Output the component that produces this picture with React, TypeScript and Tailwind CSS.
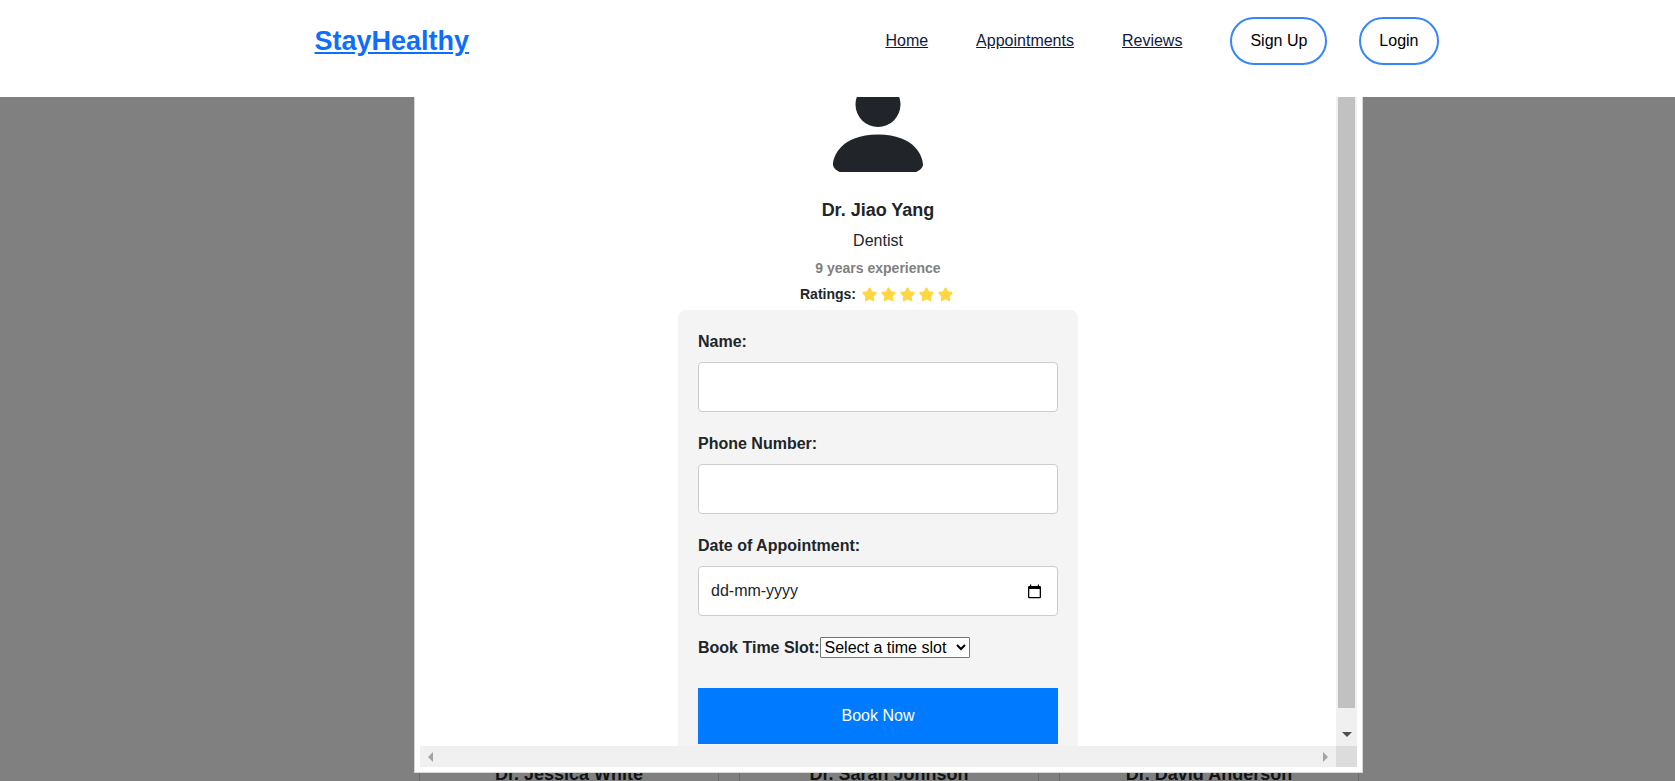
import React from "react";

const doctors = ["Dr. Jessica White", "Dr. Sarah Johnson", "Dr. David Anderson"];

function Star() {
  return (
    <svg viewBox="0 0 14 14" className="size-[15px]" aria-hidden="true">
      <path
        d="M7 1.400 8.800 4.900 12.600 5.500 9.900 8.300 10.500 12.200 7 10.600 3.500 12.200 4.100 8.300 1.400 5.500 5.200 4.900Z"
        fill="#ffd740"
        stroke="#ffd740"
        strokeWidth="2"
        strokeLinejoin="round"
      />
    </svg>
  );
}

function PersonIcon() {
  return (
    <svg viewBox="0 0 16 16" className="size-[120px] shrink-0" fill="#212529" aria-hidden="true">
      <path d="M2.900 14C2.400 13.800 2 13.400 2 13c0-1 1-4 6-4s6 3 6 4c0 .4-.4.8-.9 1H2.900Zm5.100-6a3 3 0 1 0 0-6 3 3 0 0 0 0 6Z" />
    </svg>
  );
}

function Header() {
  return (
    <header className="h-[97px] shrink-0 bg-white">
      <div className="mx-auto flex max-w-[1202px] items-center justify-between pt-[17px] pl-[78px]">
        <a href="#" className="text-[27px] leading-8 font-bold text-[#0d6efd] underline">
          StayHealthy
        </a>
        <nav className="flex items-center gap-12 text-base text-[#0f1a3f]">
          <a href="#home" className="underline">Home</a>
          <a href="#appointments" className="underline">Appointments</a>
          <a href="#reviews" className="underline">Reviews</a>
          <div className="flex gap-8 text-black">
            <button className="h-12 rounded-full border-2 border-[#3685fb] px-[18px]">Sign Up</button>
            <button className="h-12 rounded-full border-2 border-[#3685fb] px-[18px]">Login</button>
          </div>
        </nav>
      </div>
    </header>
  );
}

function DoctorCards() {
  return (
    <div className="mx-auto h-full max-w-[1043px] pl-[103px]">
      <div className="grid h-full grid-cols-3 gap-5">
        {doctors.map((name) => (
          <article key={name} className="border-x border-[#6a6a6a] pt-[665px] text-center">
            <h3 className="text-lg leading-6 font-bold whitespace-nowrap text-[#111315]">{name}</h3>
          </article>
        ))}
      </div>
    </div>
  );
}

function BookingForm() {
  const field = "mt-2 mb-5 h-[50px] w-full rounded border border-[#ccc] bg-white px-3";
  return (
    <form className="w-[400px] rounded-lg bg-[#f4f4f4] p-5" onSubmit={(e) => e.preventDefault()}>
      <label htmlFor="name" className="block font-bold">Name:</label>
      <input id="name" type="text" className={field} />
      <label htmlFor="phone" className="block font-bold">Phone Number:</label>
      <input id="phone" type="tel" className={field} />
      <label htmlFor="date" className="block font-bold">Date of Appointment:</label>
      <div className="mt-2 mb-5 flex h-[50px] items-center rounded border border-[#ccc] bg-white pr-4 pl-3">
        <input
          id="date"
          type="text"
          placeholder="dd-mm-yyyy"
          className="min-w-0 flex-1 outline-none placeholder:text-[#212529]"
        />
        <button type="button" aria-label="Open calendar">
          <svg viewBox="0 0 13 15" className="h-[15px] w-[13px]" aria-hidden="true">
            <path
              d="M2 .5h1.200V2h6.600V.5H11V2h.8Q13 2 13 3.200V13q0 1.200-1.200 1.200H1.200Q0 14.200 0 13V3.200Q0 2 1.200 2H2ZM1.300 5v7.900h10.400V5Z"
              fill="#000"
              fillRule="evenodd"
            />
          </svg>
        </button>
      </div>
      <div className="mb-7 flex h-6 items-center">
        <label htmlFor="slot" className="font-bold whitespace-nowrap">Book Time Slot:</label>
        <select id="slot" className="mb-0.5 h-[21px] w-[150px] rounded-[1px] border border-[#767676] bg-white leading-none text-black">
          <option>Select a time slot</option>
          <option>9:00 AM</option>
          <option>10:00 AM</option>
        </select>
      </div>
      <button type="submit" className="h-14 w-full bg-[#007bff] text-white">Book Now</button>
    </form>
  );
}

function BookingDialog() {
  return (
    <div className="absolute inset-0 pb-2">
      <div className="mx-auto h-full max-w-[1051px] pl-[102px]">
        <div
          role="dialog"
          aria-label="Book an appointment"
          className="flex h-full flex-col border border-t-0 border-[#d7d9d7] bg-white px-[5px] pb-[5px]"
        >
          <div className="flex min-h-0 flex-1">
            <div className="min-w-0 flex-1 overflow-hidden">
              <div className="-mt-[30px] flex flex-col items-center">
                <PersonIcon />
                <h2 className="mt-[11px] text-lg leading-6 font-bold">Dr. Jiao Yang</h2>
                <p className="mt-[7px] leading-6">Dentist</p>
                <p className="mt-[3px] text-sm leading-6 font-bold text-[#808080]">9 years experience</p>
                <div className="mt-[2px] flex items-center pr-[3px]">
                  <span className="text-sm leading-6 font-bold">Ratings:</span>
                  <span className="ml-1.5 flex gap-1">
                    <Star />
                    <Star />
                    <Star />
                    <Star />
                    <Star />
                  </span>
                </div>
                <div className="mt-1">
                  <BookingForm />
                </div>
              </div>
            </div>
            <div className="flex w-[21px] flex-col items-center bg-[#f0f0f0]">
              <div className="w-[17px] flex-1 bg-[#c1c1c1]" />
              <div className="flex h-[38px] flex-col items-center justify-end pb-[9px]">
                <svg viewBox="0 0 10 5" className="h-[5px] w-2.5" aria-hidden="true">
                  <path d="M0 0h10L5 5Z" fill="#505050" />
                </svg>
              </div>
            </div>
          </div>
          <div className="flex h-[21px]">
            <div className="flex flex-1 items-center justify-between bg-[#f0f0f0] px-2">
              <svg viewBox="0 0 5 10" className="h-2.5 w-[5px]" aria-hidden="true">
                <path d="M5 0v10L0 5Z" fill="#a3a3a3" />
              </svg>
              <svg viewBox="0 0 5 10" className="h-2.5 w-[5px]" aria-hidden="true">
                <path d="M0 0v10L5 5Z" fill="#a3a3a3" />
              </svg>
            </div>
            <div className="w-[21px] bg-[#dcdcdc]" />
          </div>
        </div>
      </div>
    </div>
  );
}

export default function App() {
  return (
    <div className="flex h-screen flex-col overflow-hidden font-['Liberation_Sans',Arial,sans-serif] text-base text-[#212529]">
      <Header />
      <main className="relative min-h-0 flex-1 overflow-hidden bg-[#808080]">
        <DoctorCards />
        <BookingDialog />
      </main>
    </div>
  );
}
